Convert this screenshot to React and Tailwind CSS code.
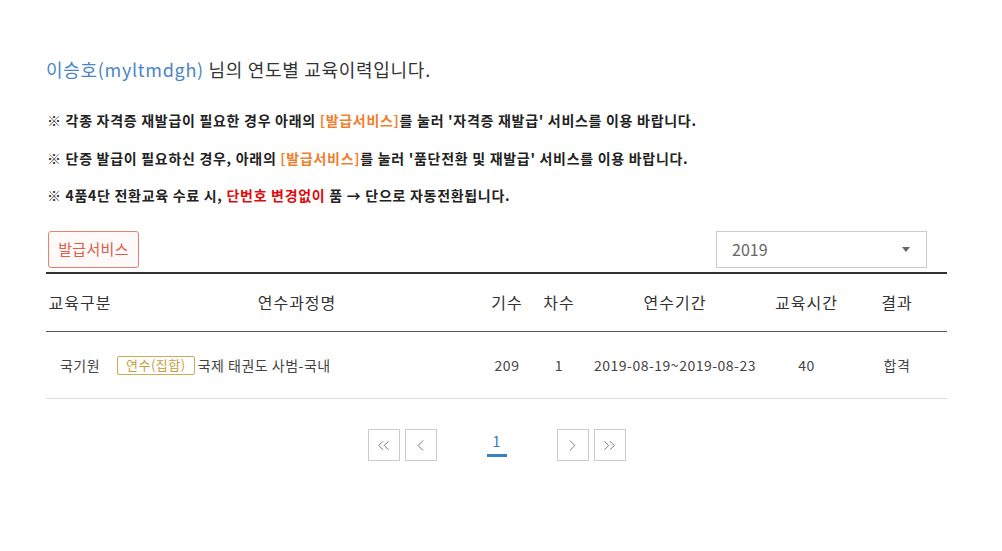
import { ChevronLeft, ChevronRight, ChevronsLeft, ChevronsRight } from 'lucide-react';

const FONT = { fontFamily: '"Noto Sans CJK KR", "Noto Sans", sans-serif' };

const COLUMNS = [
  { label: '교육구분', width: 68 },
  { label: '연수과정명', width: 366 },
  { label: '기수', width: 54 },
  { label: '차수', width: 50 },
  { label: '연수기간', width: 182 },
  { label: '교육시간', width: 81 },
  { label: '결과', width: 100 },
];

const ROWS = [
  {
    org: '국기원',
    type: '연수(집합)',
    course: '국제 태권도 사범-국내',
    term: '209',
    round: '1',
    period: '2019-08-19~2019-08-23',
    hours: '40',
    result: '합격',
  },
];

function PageBox({ children }) {
  return (
    <button className="flex h-[32px] w-[32px] items-center justify-center border border-[#cccccc] bg-white text-[#555555]">
      {children}
    </button>
  );
}

export default function App() {
  return (
    <div className="min-h-[551px] bg-white" style={FONT}>
      <div className="ml-[46px] w-[901px] pt-[57px]">
        {/* Title */}
        <h2 className="text-[18px] font-normal leading-[24px] tracking-[0.7px] text-[#333333]">
          <span className="text-[#4a86c5]">이승호(myltmdgh)</span> 님의 연도별 교육이력입니다.
        </h2>

        {/* Notices */}
        <div className="mt-[21px] pl-[1px] text-[14px] font-bold leading-[37.5px] tracking-[0.7px] text-[#222222]">
          <p>
            ※ 각종 자격증 재발급이 필요한 경우 아래의 <span className="text-[#f07f2f]">[발급서비스]</span>를 눌러
            '자격증 재발급' 서비스를 이용 바랍니다.
          </p>
          <p>
            ※ 단증 발급이 필요하신 경우, 아래의 <span className="text-[#f07f2f]">[발급서비스]</span>를 눌러
            '품단전환 및 재발급' 서비스를 이용 바랍니다.
          </p>
          <p>
            ※ 4품4단 전환교육 수료 시, <span className="text-[#e00b0b]">단번호 변경없이</span> 품 → 단으로
            자동전환됩니다.
          </p>
        </div>

        {/* Controls */}
        <div className="mt-[16px] flex h-[37px] items-center justify-between">
          <button className="ml-[2px] h-[37px] w-[91px] rounded-[3px] border border-[#e8806d] bg-[#fffafa] text-[15px] tracking-[0.3px] text-[#e35a45]">
            발급서비스
          </button>
          <div className="mr-[20px] flex h-[37px] w-[211px] items-center justify-between border border-[#cccccc] pl-[15px] pr-[16px]">
            <span className="text-[16px] text-[#666666]">2019</span>
            <span className="h-0 w-0 border-x-[4.5px] border-t-[5px] border-x-transparent border-t-[#666666]" />
          </div>
        </div>

        {/* Table */}
        <table className="mt-[4px] w-full table-fixed border-collapse border-t-2 border-[#333333]">
          <colgroup>
            {COLUMNS.map((c) => (
              <col key={c.label} style={{ width: c.width }} />
            ))}
          </colgroup>
          <thead>
            <tr className="h-[59px] border-b border-[#555555]">
              {COLUMNS.map((c) => (
                <th key={c.label} className="text-center text-[16px] font-normal tracking-[1px] text-[#333333]">
                  {c.label}
                </th>
              ))}
            </tr>
          </thead>
          <tbody>
            {ROWS.map((r) => (
              <tr key={r.course} className="h-[67px] border-b border-[#dddddd] text-[14px] tracking-[0.5px] text-[#444444]">
                <td className="text-center">{r.org}</td>
                <td className="pl-[3px]">
                  <div className="flex items-center">
                    <span className="mr-[3px] flex h-[19px] items-center rounded-[2px] border border-[#cdaa55] px-[8px] text-[13px] text-[#c69e3e]">
                      {r.type}
                    </span>
                    <span>{r.course}</span>
                  </div>
                </td>
                <td className="text-center">{r.term}</td>
                <td className="text-center">{r.round}</td>
                <td className="text-center">{r.period}</td>
                <td className="text-center">{r.hours}</td>
                <td className="text-center">{r.result}</td>
              </tr>
            ))}
          </tbody>
        </table>

        {/* Pagination */}
        <div className="mt-[30px] flex items-center justify-center gap-[5px]">
          <PageBox>
            <ChevronsLeft size={19} strokeWidth={1} />
          </PageBox>
          <PageBox>
            <ChevronLeft size={19} strokeWidth={1} />
          </PageBox>
          <div className="mx-[45px] flex h-[32px] w-[20px] flex-col items-center justify-between">
            <span className="mt-[2px] text-[15px] leading-[20px] text-[#3a80c0]">1</span>
            <span className="mb-[4px] h-[3px] w-[20px] bg-[#3a80c0]" />
          </div>
          <PageBox>
            <ChevronRight size={19} strokeWidth={1} />
          </PageBox>
          <PageBox>
            <ChevronsRight size={19} strokeWidth={1} />
          </PageBox>
        </div>
      </div>
    </div>
  );
}
